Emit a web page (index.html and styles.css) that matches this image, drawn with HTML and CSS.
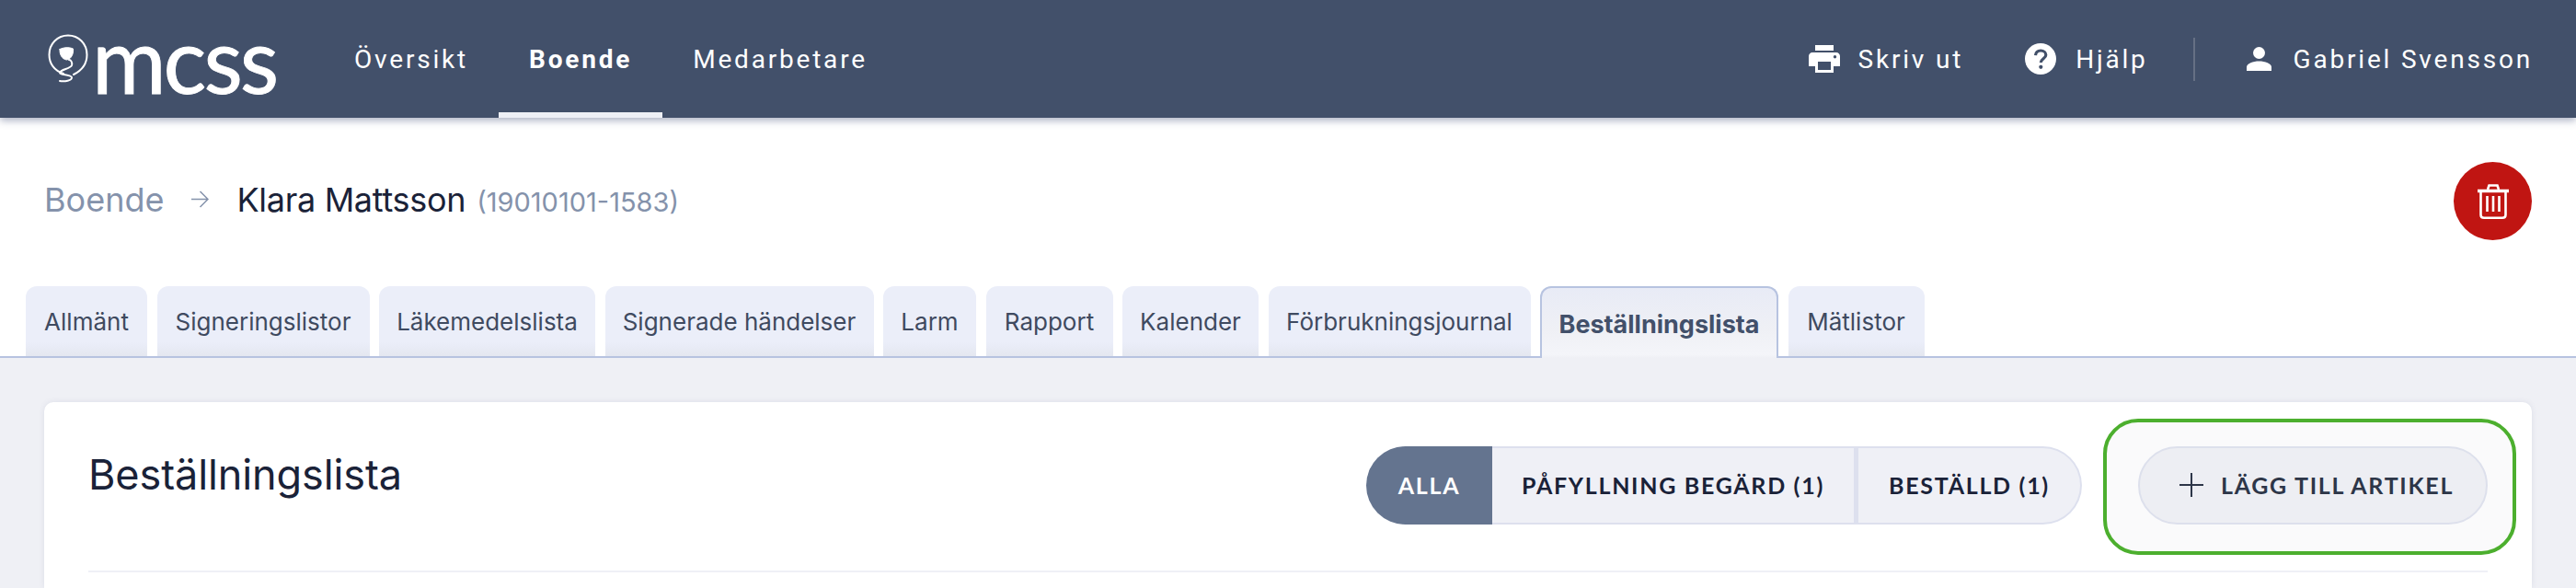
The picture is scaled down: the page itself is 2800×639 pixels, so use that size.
FILE: index.html
```html
<!DOCTYPE html>
<html lang="sv">
<head>
<meta charset="utf-8">
<title>Beställningslista</title>
<link rel="stylesheet" href="styles.css">
</head>
<body>
<header class="topbar">
  <div class="brand">
    <svg class="brand-mark" viewBox="0 0 44 54" fill="none" stroke="#fff" stroke-width="2" stroke-linecap="round">
      <path d="M17 43C7 40 1.500 32 1.500 22.500C1.500 10.500 10.500 1.500 22 1.500C33.500 1.500 42.500 10.500 42.500 22.500C42.500 32 37 39.500 28 44"/>
      <path d="M13 16.500C17 14.500 23 14 27.500 16C28 21 26 27 20.500 28C15.500 27.500 12.500 22 13 16.500Z" fill="#fff" stroke-width="1"/>
      <path d="M23 28C25 28 27 31 26 34C24.500 38 14 38 13 42C12.500 44.500 25 44 26 47C26.500 50.500 18 52 13 51"/>
    </svg>
    <span class="brand-name">mcss</span>
  </div>
  <nav class="mainnav">
    <a class="mainnav-item">Översikt</a>
    <a class="mainnav-item is-active">Boende</a>
    <a class="mainnav-item">Medarbetare</a>
  </nav>
  <div class="tools">
    <a class="tool tool-print">
      <svg class="icon-print" viewBox="0 0 34 30" fill="#fff"><path d="M7 0H27V6H7Z"/><path fill-rule="evenodd" d="M4 8H30C32.200 8 34 9.800 34 12V23H27V30H7V23H0V12C0 9.800 1.800 8 4 8ZM10 18V27H24V18ZM28.500 11A1.700 1.700 0 1 0 28.500 14.400A1.700 1.700 0 1 0 28.500 11Z"/></svg>
      <span>Skriv ut</span>
    </a>
    <a class="tool tool-help">
      <svg class="icon-help" viewBox="0 0 34 34"><circle cx="17" cy="17" r="17" fill="#fff"/><path d="M11.500 13.200C11.800 10 14 8 17.200 8C20.400 8 22.800 10 22.800 12.800C22.800 16.600 17.300 17 17.300 21" fill="none" stroke="#42506a" stroke-width="3.200"/><circle cx="17.300" cy="25.800" r="2.100" fill="#42506a"/></svg>
      <span>Hjälp</span>
    </a>
    <span class="tool-sep"></span>
    <a class="tool tool-user">
      <svg class="icon-user" viewBox="0 0 27 26" fill="#fff"><circle cx="13.500" cy="6.500" r="6.500"/><path d="M0 26V22C0 18 7 15.500 13.500 15.500C20 15.500 27 18 27 22V26Z"/></svg>
      <span>Gabriel Svensson</span>
    </a>
  </div>
</header>

<section class="pagehead">
  <div class="crumbs">
    <span class="crumb-root">Boende</span>
    <svg class="crumb-arrow" viewBox="0 0 19 19" fill="none" stroke="#8492ab" stroke-width="1.500"><path d="M0 9.500H18M9.500 1L18 9.500L9.500 18"/></svg>
    <span class="crumb-name">Klara Mattsson</span>
    <span class="crumb-id">(19010101-1583)</span>
  </div>
  <button class="delete-btn" aria-label="Ta bort">
    <svg viewBox="0 0 34 38" fill="none" stroke="#fff" stroke-width="2.600"><path d="M0 7.500H34" stroke-width="3.400"/><path d="M11 6L12.500 1.500H21.500L23 6"/><path d="M3.500 8V33.500C3.500 35.500 5 36.700 7 36.700H27C29 36.700 30.500 35.500 30.500 33.500V8"/><path d="M10.500 13V30M17 13V30M23.500 13V30"/></svg>
  </button>
</section>

<div class="tabs">
  <a class="tab">Allmänt</a>
  <a class="tab">Signeringslistor</a>
  <a class="tab">Läkemedelslista</a>
  <a class="tab">Signerade händelser</a>
  <a class="tab">Larm</a>
  <a class="tab">Rapport</a>
  <a class="tab">Kalender</a>
  <a class="tab">Förbrukningsjournal</a>
  <a class="tab is-active">Beställningslista</a>
  <a class="tab">Mätlistor</a>
</div>

<main class="content">
  <section class="card">
    <div class="card-head">
      <h1 class="card-title">Beställningslista</h1>
      <div class="actions">
        <div class="segments">
          <button class="segment is-active">Alla</button>
          <button class="segment">Påfyllning begärd (1)</button>
          <button class="segment">Beställd (1)</button>
        </div>
        <div class="highlight">
          <button class="add-btn">
            <svg viewBox="0 0 26 26" stroke="#2d3648" stroke-width="2" fill="none"><path d="M13 0V26M0 13H26"/></svg>
            <span>Lägg till artikel</span>
          </button>
        </div>
      </div>
    </div>
  </section>
</main>
</body>
</html>
```

FILE: styles.css
```css
* { box-sizing: border-box; }
html, body { margin: 0; height: 639px; overflow: hidden; background: #fff; }
body { display: flex; flex-direction: column; font-family: Inter, "Liberation Sans", sans-serif; color: #1a2238; }

.topbar {
  height: 128px; flex: none; display: flex; align-items: center; padding: 0 47px 0 52px;
  background: #42506a; color: #fff; box-shadow: 0 3px 8px rgba(70, 85, 125, .45);
  position: relative; z-index: 2; font-family: Roboto, sans-serif;
}
.brand { display: flex; align-items: center; width: 299px; flex: none; height: 54px; }
.brand-mark { width: 44px; height: 54px; flex: none; }
.brand-name { font-family: Lato, sans-serif; font-size: 98px; line-height: 54px; letter-spacing: -3px; margin-left: 4px; -webkit-text-stroke: .8px #fff; }
.mainnav { display: flex; align-self: stretch; margin-left: 1px; }
.mainnav-item { display: flex; align-items: center; padding: 6px 33px 0; font-size: 28px; letter-spacing: 2.8px; border-bottom: 6px solid transparent; }
.mainnav-item.is-active { font-weight: 700; border-bottom-color: #eef0f6; }
.tools { margin-left: auto; display: flex; align-items: center; font-size: 28px; letter-spacing: 2.8px; }
.tool { display: flex; align-items: center; }
.tool svg { flex: none; }
.icon-print { width: 34px; height: 30px; margin-right: 20px; }
.icon-help { width: 34px; height: 34px; margin-right: 21px; }
.icon-user { width: 27px; height: 26px; margin-right: 24px; }
.tool-help { margin-left: 67px; }
.tool-sep { width: 2px; height: 47px; background: #667084; margin: 0 56px 0 49px; }

.pagehead { height: 183px; flex: none; display: flex; align-items: center; justify-content: space-between; padding: 0 48px 0 48px; }
.crumbs { display: flex; align-items: baseline; margin-top: -6px; }
.crumb-root { font-size: 36px; color: #8492ab; }
.crumb-arrow { width: 19px; height: 19px; margin: 0 30px; align-self: center; }
.crumb-name { font-size: 36px; color: #1a2238; letter-spacing: -.3px; }
.crumb-id { font-size: 29px; color: #8492ab; margin-left: 12px; }
.delete-btn { width: 85px; height: 85px; border: 0; border-radius: 50%; background: #c01512; display: flex; align-items: center; justify-content: center; padding: 0; margin-top: -2px; }
.delete-btn svg { width: 34px; height: 38px; }

.tabs {
  height: 78px; flex: none; display: grid; column-gap: 10.5px; padding-left: 28px;
  grid-template-columns: 132px 231px 235px 292px 101px 138px 148px 285px 259px 148px; justify-content: start;
  border-bottom: 2px solid #b7c3e0; position: relative; z-index: 1;
}
.tab {
  height: 76px; display: flex; align-items: center; justify-content: center; font-size: 26px; color: #3f4a60;
  background: linear-gradient(#ebeef9 80%, #e4e7f0); border-radius: 12px 12px 0 0;
}
.tab.is-active {
  height: 78px; padding-top: 2px; font-size: 27px; font-weight: 700; color: #42506a; border: 2px solid #b7c3e0; border-bottom: 0;
  background: linear-gradient(#e8ebf6, #eff0f5 60%, #f4f5f9 95%, #eff0f5);
}

.content { flex: 1; min-height: 0; background: #eff0f5; padding: 48px 48px 0; }
.card { background: #fff; border-radius: 10px 10px 0 0; box-shadow: 0 0 6px rgba(90, 100, 140, .12); height: 100%; padding: 0 48px; }
.card-head { height: 185px; display: flex; align-items: flex-start; justify-content: space-between; border-bottom: 2px solid #eff0f6; }
.card-title { margin: 52px 0 0; font-size: 45px; font-weight: 400; line-height: 54px; letter-spacing: -.1px; color: #1a2238; }
.actions { display: flex; align-items: flex-start; padding-top: 48px; }
.segments { display: flex; height: 85px; margin-right: 23px; }
.segment {
  height: 85px; padding: 0 0 2px; font: 700 25px Lato, sans-serif; letter-spacing: 1.7px; text-transform: uppercase;
  background: #eff0f6; color: #1a2238; border: 2px solid #dde0ee; border-left: 0; width: 395px;
}
.segment + .segment + .segment { border-left: 3px solid #dde0ee; width: 246px; }
.segment.is-active { background: #64748f; color: #fff; border: 0; border-radius: 43px 0 0 43px; width: 137px; }
.segment:last-child { border-radius: 0 43px 43px 0; }
.highlight { margin: -30px -31px 0 0; width: 449px; height: 148px; border: 4px solid #4caf2e; border-radius: 38px; background: #fafafb; padding: 26px 0 0 34px; }
.add-btn {
  height: 85px; width: 380px; display: flex; align-items: center; padding: 0 0 2px 43px; border: 2px solid #dde0ec; border-radius: 43px; background: #edeef3;
  font: 700 25px Lato, sans-serif; letter-spacing: 1.7px; text-transform: uppercase; color: #2d3648;
}
.add-btn svg { width: 26px; height: 26px; margin-right: 19px; flex: none; }
```
